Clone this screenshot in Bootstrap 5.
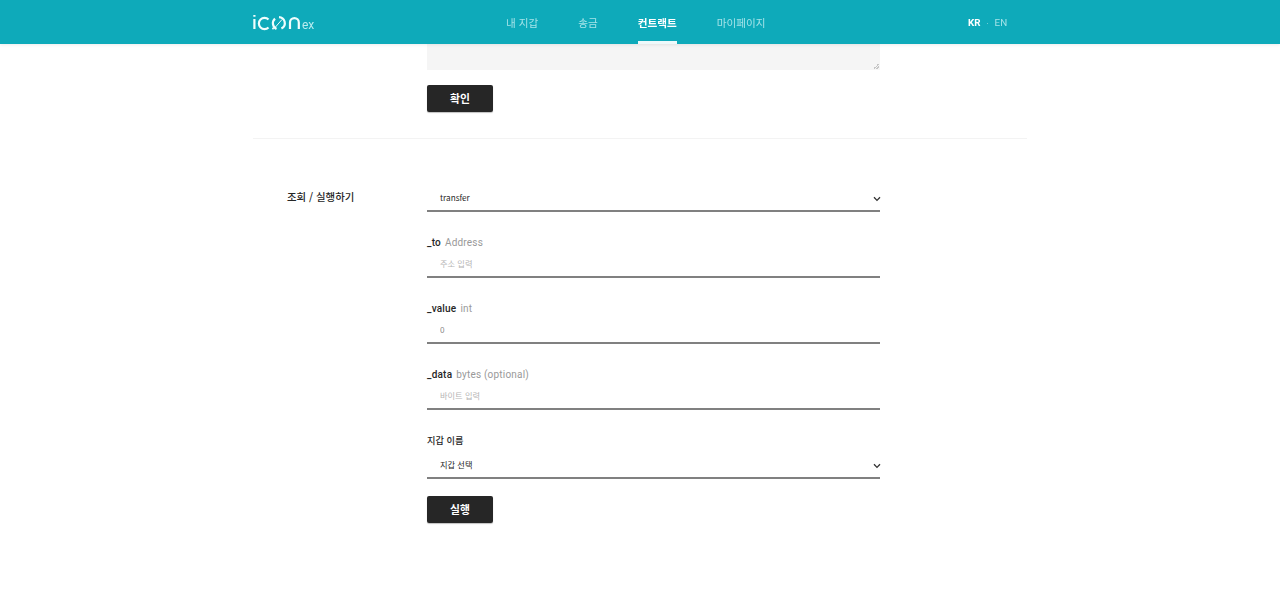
<!DOCTYPE html>
<html lang="ko">
<head>
<meta charset="utf-8">
<title>ICONex</title>
<link href="https://cdn.jsdelivr.net/npm/bootstrap@5.3.0/dist/css/bootstrap.min.css" rel="stylesheet">
<style>
html,body{height:596px;overflow:hidden;background:#fff;}
body{font-family:"Noto Sans CJK KR","Noto Sans",Roboto,sans-serif;color:#262626;}
.top-bar{height:44px;background:#0eaaba;box-shadow:0 1px 3px rgba(0,0,0,.08);}
.bar-inner{width:774px;height:44px;margin:0 auto;position:relative;}
.brand-logo{position:absolute;left:0;top:13px;display:block;}
.main-nav{position:absolute;left:253px;top:0;height:44px;gap:40px;}
.main-nav a{display:block;height:44px;line-height:46px;font-size:10.6px;color:#a5e3e8;text-decoration:none;white-space:nowrap;}
.main-nav a.on{color:#fff;font-weight:700;border-bottom:3px solid #eefafb;}
.lang-box{position:absolute;left:715px;top:0;height:44px;line-height:45px;font-family:Roboto,sans-serif;font-size:9.8px;color:#a5e3e8;}
.lang-box b{color:#fff;font-weight:700;}
.lang-dot{margin:0 6px;font-size:8px;}
.page-wrap{width:774px;margin:0 auto;}
.text-box{display:block;width:453px;height:70px;margin-left:174px;background-color:#f5f5f5;background-image:linear-gradient(135deg,transparent 50%,#c4c4c4 50%,#c4c4c4 62%,transparent 62%,transparent 74%,#c4c4c4 74%,#c4c4c4 86%,transparent 86%);background-size:6px 6px;background-position:right 1px bottom 1px;background-repeat:no-repeat;border:0;border-radius:0;padding:6px 13px;resize:none;}
.dark-btn{display:block;width:66px;height:27px;padding:0;background:#262626;color:#fff;border:0;border-radius:2px;font-size:10.8px;font-weight:700;line-height:27px;box-shadow:0 1px 1px rgba(0,0,0,.25);}
.first-btn{margin:15px 0 0 174px;}
.rule-line{height:1px;background:#f3f3f3;margin-top:26px;}
.form-row{padding-top:47px;}
.side-title{width:174px;padding-left:34px;font-size:10.4px;font-weight:500;line-height:22px;color:#262626;flex:none;}
.form-col{width:453px;}
.line-field{display:block;width:100%;height:24px;border:0;border-bottom:2px solid #808080;border-radius:0;background:transparent;padding:0 13px 4px;font-size:8.2px;color:#8a8a8a;outline:0;box-shadow:none;}
.line-field::placeholder{color:#b5b5b5;opacity:1;}
.line-select{display:flex;align-items:center;justify-content:space-between;height:26px;border-bottom:2px solid #808080;padding:0 0 2px 13px;font-size:8.2px;color:#262626;}
.field-gap{margin-top:24px;}
.wallet-gap{margin-top:23px;}
.field-label{display:block;font-family:Roboto,"Noto Sans CJK KR",sans-serif;font-size:10px;line-height:14px;margin:0 0 4px;color:#999;letter-spacing:.2px;height:14px;}
.field-label strong{color:#262626;font-weight:500;margin-right:4px;}
.wallet-label{font-family:"Noto Sans CJK KR",sans-serif;color:#262626;font-weight:500;font-size:9.2px;letter-spacing:0;margin-bottom:6px;}
.run-btn{margin-top:17px;}
.chev{display:block;margin:4px -1px 0 0;}
</style>
</head>
<body>
<header class="top-bar fixed-top">
  <div class="bar-inner">
    <svg class="brand-logo" width="64" height="18" viewBox="0 0 64 18" fill="none" stroke="#f0fdfd" stroke-width="2.2" aria-label="ICONex">
      <path d="M1.4 6V16M1.4 2V3.8"/>
      <path d="M15.5 6.6A5.6 5.6 0 1 0 15.5 14.4"/>
      <path d="M23.5 16A6.3 6.3 0 0 1 22 5.6M26 4.2A6.3 6.3 0 0 1 31.6 8.5 6.3 6.3 0 0 1 28.4 15.6"/>
      <path d="M22.5 14 29 6.5" stroke-width="1"/>
      <circle cx="20" cy="15.6" r="1" fill="#f0fdfd" stroke="none"/>
      <path d="M37 16V9.5a4.4 4.4 0 0 1 8.8 0V16"/>
      <text x="49" y="16" font-family="Roboto,sans-serif" font-size="12" fill="#b9ecef" stroke="none">ex</text>
    </svg>
    <nav class="main-nav d-flex">
      <a href="#">내 지갑</a>
      <a href="#">송금</a>
      <a href="#" class="on">컨트랙트</a>
      <a href="#">마이페이지</a>
    </nav>
    <div class="lang-box"><b>KR</b><span class="lang-dot">·</span>EN</div>
  </div>
</header>
<main class="page-wrap">
  <textarea class="text-box form-control" aria-label="ABI"></textarea>
  <button type="button" class="btn dark-btn first-btn">확인</button>
  <div class="rule-line"></div>
  <section class="form-row d-flex">
    <div class="side-title">조회 / 실행하기</div>
    <div class="form-col">
      <div class="line-select">
        <span>transfer</span>
        <svg class="chev" width="8" height="6" viewBox="0 0 8 6" fill="none" stroke="#333" stroke-width="1.3"><path d="M1 1.2 4 4.4 7 1.2"/></svg>
      </div>
      <div class="field-gap">
        <label class="field-label"><strong>_to</strong>Address</label>
        <input class="line-field" type="text" placeholder="주소 입력">
      </div>
      <div class="field-gap">
        <label class="field-label"><strong>_value</strong>int</label>
        <input class="line-field" type="text" value="0">
      </div>
      <div class="field-gap">
        <label class="field-label"><strong>_data</strong>bytes (optional)</label>
        <input class="line-field" type="text" placeholder="바이트 입력">
      </div>
      <div class="wallet-gap">
        <label class="field-label wallet-label">지갑 이름</label>
        <div class="line-select">
          <span>지갑 선택</span>
          <svg class="chev" width="8" height="6" viewBox="0 0 8 6" fill="none" stroke="#333" stroke-width="1.3"><path d="M1 1.2 4 4.4 7 1.2"/></svg>
        </div>
      </div>
      <button type="button" class="btn dark-btn run-btn">실행</button>
    </div>
  </section>
</main>
<script src="https://cdn.jsdelivr.net/npm/bootstrap@5.3.0/dist/js/bootstrap.bundle.min.js"></script>
</body>
</html>
